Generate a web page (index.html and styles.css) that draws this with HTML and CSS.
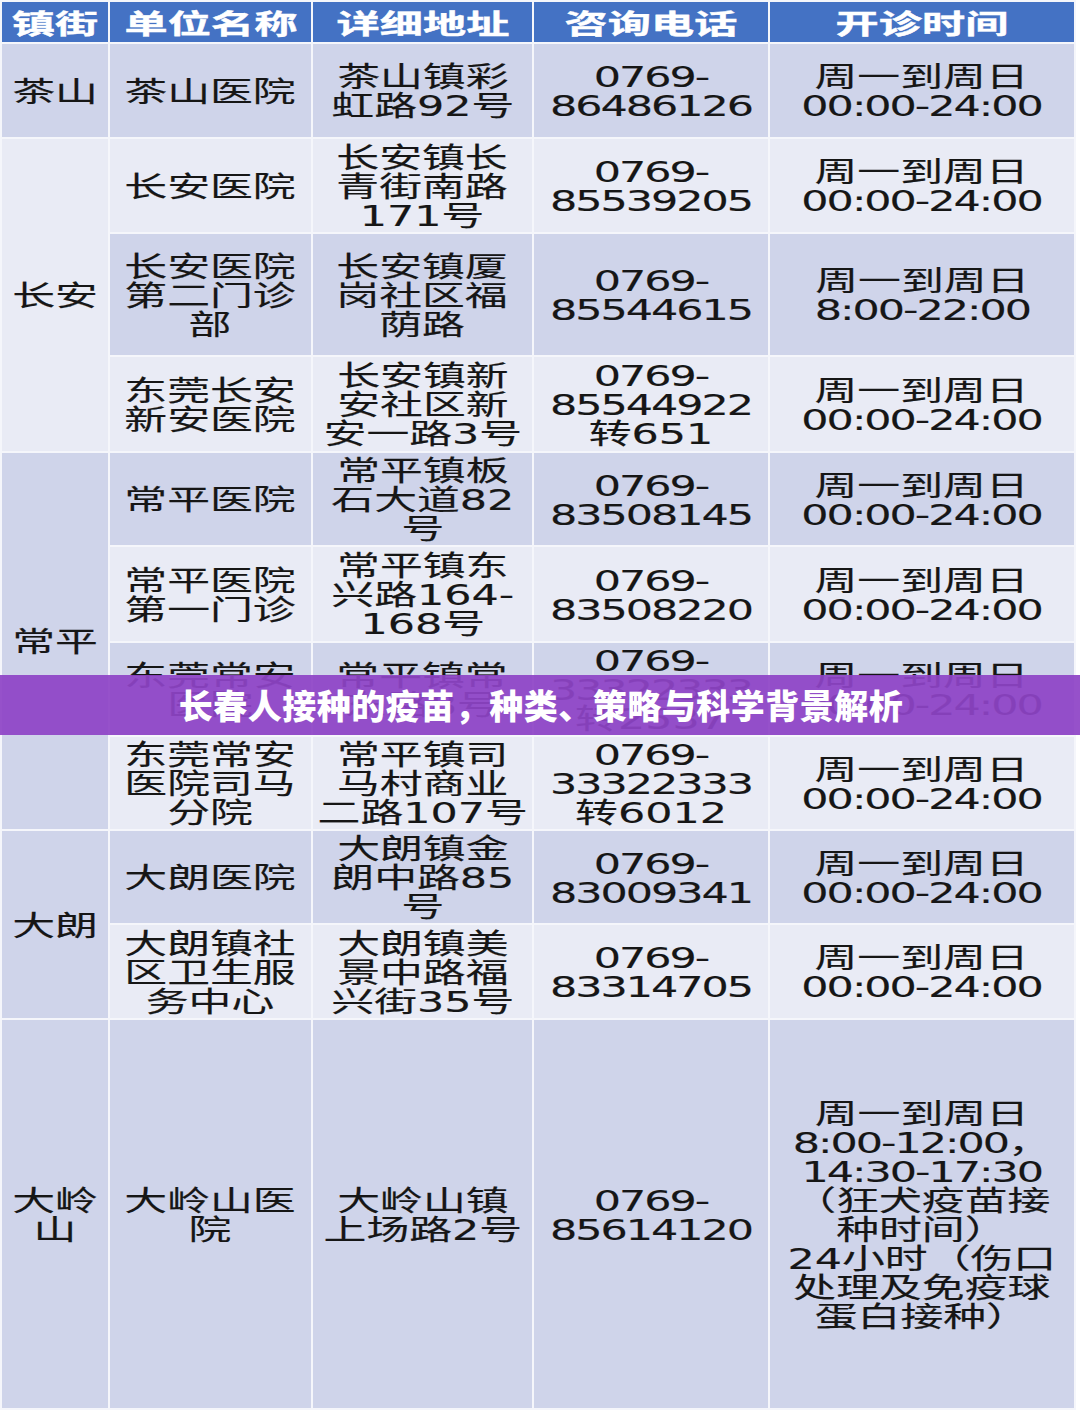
FILE: index.html
```html
<!DOCTYPE html>
<html lang="zh-CN">
<head>
<meta charset="utf-8">
<title>长春人接种的疫苗，种类、策略与科学背景解析</title>
<link rel="stylesheet" href="styles.css">
</head>
<body>
<div class="sheet">
  <div class="c h"><span class="t">镇街</span></div>
  <div class="c h"><span class="t">单位名称</span></div>
  <div class="c h"><span class="t">详细地址</span></div>
  <div class="c h"><span class="t">咨询电话</span></div>
  <div class="c h"><span class="t">开诊时间</span></div>

  <div class="c d"><span class="t">茶山</span></div>
  <div class="c d"><span class="t">茶山医院</span></div>
  <div class="c d"><span class="t">茶山镇彩<br>虹路92号</span></div>
  <div class="c d"><span class="t n">0769-<br>86486126</span></div>
  <div class="c d"><span class="t">周一到周日<br><span class="n">00:00-24:00</span></span></div>

  <div class="c l span3"><span class="t">长安</span></div>
  <div class="c l"><span class="t">长安医院</span></div>
  <div class="c l"><span class="t">长安镇长<br>青街南路<br>171号</span></div>
  <div class="c l"><span class="t n">0769-<br>85539205</span></div>
  <div class="c l"><span class="t">周一到周日<br><span class="n">00:00-24:00</span></span></div>

  <div class="c d"><span class="t">长安医院<br>第二门诊<br>部</span></div>
  <div class="c d"><span class="t">长安镇厦<br>岗社区福<br>荫路</span></div>
  <div class="c d"><span class="t n">0769-<br>85544615</span></div>
  <div class="c d"><span class="t">周一到周日<br><span class="n">8:00-22:00</span></span></div>

  <div class="c l"><span class="t">东莞长安<br>新安医院</span></div>
  <div class="c l"><span class="t">长安镇新<br>安社区新<br>安一路3号</span></div>
  <div class="c l"><span class="t"><span class="n">0769-<br>85544922</span><br>转651</span></div>
  <div class="c l"><span class="t">周一到周日<br><span class="n">00:00-24:00</span></span></div>

  <div class="c d span4"><span class="t">常平</span></div>
  <div class="c d"><span class="t">常平医院</span></div>
  <div class="c d"><span class="t">常平镇板<br>石大道82<br>号</span></div>
  <div class="c d"><span class="t n">0769-<br>83508145</span></div>
  <div class="c d"><span class="t">周一到周日<br><span class="n">00:00-24:00</span></span></div>

  <div class="c l"><span class="t">常平医院<br>第一门诊</span></div>
  <div class="c l"><span class="t">常平镇东<br>兴路164-<br>168号</span></div>
  <div class="c l"><span class="t n">0769-<br>83508220</span></div>
  <div class="c l"><span class="t">周一到周日<br><span class="n">00:00-24:00</span></span></div>

  <div class="c d"><span class="t">东莞常安<br>医院</span></div>
  <div class="c d"><span class="t">常平镇常<br>东路8号</span></div>
  <div class="c d"><span class="t"><span class="n">0769-<br>33322333</span><br>转2537</span></div>
  <div class="c d"><span class="t">周一到周日<br><span class="n">00:00-24:00</span></span></div>

  <div class="c l"><span class="t">东莞常安<br>医院司马<br>分院</span></div>
  <div class="c l"><span class="t">常平镇司<br>马村商业<br>二路107号</span></div>
  <div class="c l"><span class="t"><span class="n">0769-<br>33322333</span><br>转6012</span></div>
  <div class="c l"><span class="t">周一到周日<br><span class="n">00:00-24:00</span></span></div>

  <div class="c d span2"><span class="t">大朗</span></div>
  <div class="c d"><span class="t">大朗医院</span></div>
  <div class="c d"><span class="t">大朗镇金<br>朗中路85<br>号</span></div>
  <div class="c d"><span class="t n">0769-<br>83009341</span></div>
  <div class="c d"><span class="t">周一到周日<br><span class="n">00:00-24:00</span></span></div>

  <div class="c l"><span class="t">大朗镇社<br>区卫生服<br>务中心</span></div>
  <div class="c l"><span class="t">大朗镇美<br>景中路福<br>兴街35号</span></div>
  <div class="c l"><span class="t n">0769-<br>83314705</span></div>
  <div class="c l"><span class="t">周一到周日<br><span class="n">00:00-24:00</span></span></div>

  <div class="c d"><span class="t">大岭<br>山</span></div>
  <div class="c d"><span class="t">大岭山医<br>院</span></div>
  <div class="c d"><span class="t">大岭山镇<br>上场路2号</span></div>
  <div class="c d"><span class="t n">0769-<br>85614120</span></div>
  <div class="c d"><span class="t">周一到周日<br><span class="n">8:00-12:00</span>，<br><span class="n">14:30-17:30</span><br>（狂犬疫苗接<br>种时间）<br>24小时（伤口<br>处理及免疫球<br>蛋白接种）</span></div>
</div>
<div class="banner"><h1 class="banner-title">长春人接种的疫苗，种类、策略与科学背景解析</h1></div>
</body>
</html>
```
FILE: styles.css
```css
html, body {
  margin: 0;
  padding: 0;
}
body {
  width: 1080px;
  height: 1411px;
  overflow: hidden;
  position: relative;
  background: #ffffff;
  font-family: "DejaVu Sans", "Noto Sans CJK SC", sans-serif;
}
.sheet {
  display: grid;
  grid-template-columns: 106px 201px 219px 234px 304px;
  grid-template-rows: 40px 93px 93px 121px 94px 92px 94px 92px 92px 92px 93px 388px;
  gap: 2px;
  padding: 2px;
  width: max-content;
  background: #f5f6fb;
}
.c {
  display: flex;
  align-items: center;
  justify-content: center;
  text-align: center;
  color: #161616;
  font-size: 28px;
  line-height: 29px;
  padding-top: 3px;
  -webkit-text-stroke: 0.15px #161616;
}
.t {
  display: inline-block;
  white-space: nowrap;
  transform: scaleX(1.53);
  transform-origin: center center;
}
.n {
  letter-spacing: -1.3px;
}
.h {
  background: #4472c4;
  color: #ffffff;
  font-family: "Noto Sans CJK SC", sans-serif;
  font-weight: 700;
  font-size: 27px;
  padding-top: 0;
  -webkit-text-stroke: 0.4px #ffffff;
}
.h .t {
  transform: scaleX(1.6);
}
.d { background: #cfd4ea; }
.l { background: #e9ebf5; }
.span4 { grid-row: span 4; }
.span3 { grid-row: span 3; }
.span2 { grid-row: span 2; }
.banner {
  position: absolute;
  left: 0;
  top: 675px;
  width: 1080px;
  height: 60px;
  background: rgba(142, 68, 198, 0.93);
  display: flex;
  align-items: center;
  justify-content: center;
}
.banner-title {
  margin: 0;
  color: #ffffff;
  font-family: "Noto Sans CJK SC", sans-serif;
  font-weight: 900;
  font-size: 34px;
  line-height: 40px;
  letter-spacing: 0.5px;
  padding-left: 2px;
}
```
